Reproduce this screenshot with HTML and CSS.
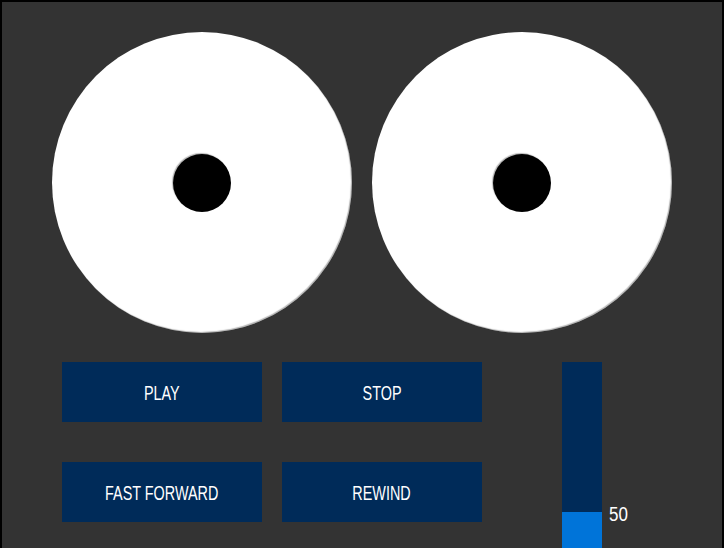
FILE: index.html
```html
<!DOCTYPE html>
<html>
<head>
<meta charset="utf-8">
<link rel="stylesheet" href="styles.css">
</head>
<body>
<div class="deck">
  <div class="reels">
    <div class="reel"><div class="hub"></div></div>
    <div class="reel"><div class="hub"></div></div>
  </div>
  <div class="controls">
    <div class="buttons">
      <button class="btn"><span class="label">PLAY</span></button>
      <button class="btn"><span class="label">STOP</span></button>
      <button class="btn"><span class="label">FAST FORWARD</span></button>
      <button class="btn"><span class="label">REWIND</span></button>
    </div>
    <div class="volume">
      <div class="track">
        <div class="fill" style="height:50px"></div>
      </div>
      <span class="value label">50</span>
    </div>
  </div>
</div>
</body>
</html>
```
FILE: styles.css
```css
html, body {
  margin: 0;
  padding: 0;
  overflow: hidden;
  background: #333333;
}
.deck {
  box-sizing: border-box;
  width: 724px;
  height: 620px;
  border: 2px solid #000;
  background: #333333;
  padding: 30px 50px;
  font-family: "Liberation Sans", Arial, sans-serif;
  color: #fff;
}
.reels {
  display: flex;
  gap: 20px;
}
.reel {
  width: 301px;
  height: 301px;
  border-radius: 50%;
  background: #fff;
  box-shadow: inset -1px -1px 1px rgba(0,0,0,0.3);
  display: flex;
  align-items: center;
  justify-content: center;
}
.hub {
  width: 58px;
  height: 58px;
  border-radius: 50%;
  background: #000;
  box-shadow: -1px -1px 1px rgba(0,0,0,0.3);
}
.controls {
  display: flex;
  margin-top: 29px;
  padding-left: 10px;
  gap: 80px;
}
.buttons {
  display: grid;
  grid-template-columns: 200px 200px;
  grid-auto-rows: 60px;
  column-gap: 20px;
  row-gap: 40px;
}
.btn {
  border: none;
  margin: 0;
  padding: 0;
  background: #002b59;
  color: #fff;
  font-family: inherit;
  display: flex;
  align-items: center;
  justify-content: center;
}
.label {
  display: inline-block;
  font-size: 20px;
  line-height: 20px;
  transform: scaleX(0.72);
  white-space: nowrap;
  padding-top: 2px;
}
.volume {
  display: flex;
  align-items: flex-start;
}
.track {
  width: 40px;
  height: 200px;
  background: #002b59;
  display: flex;
  flex-direction: column;
  justify-content: flex-end;
}
.fill {
  background: #0074d9;
}
.value {
  margin-top: 140px;
  margin-left: 7px;
  transform: scaleX(0.85);
  transform-origin: left center;
}
```
